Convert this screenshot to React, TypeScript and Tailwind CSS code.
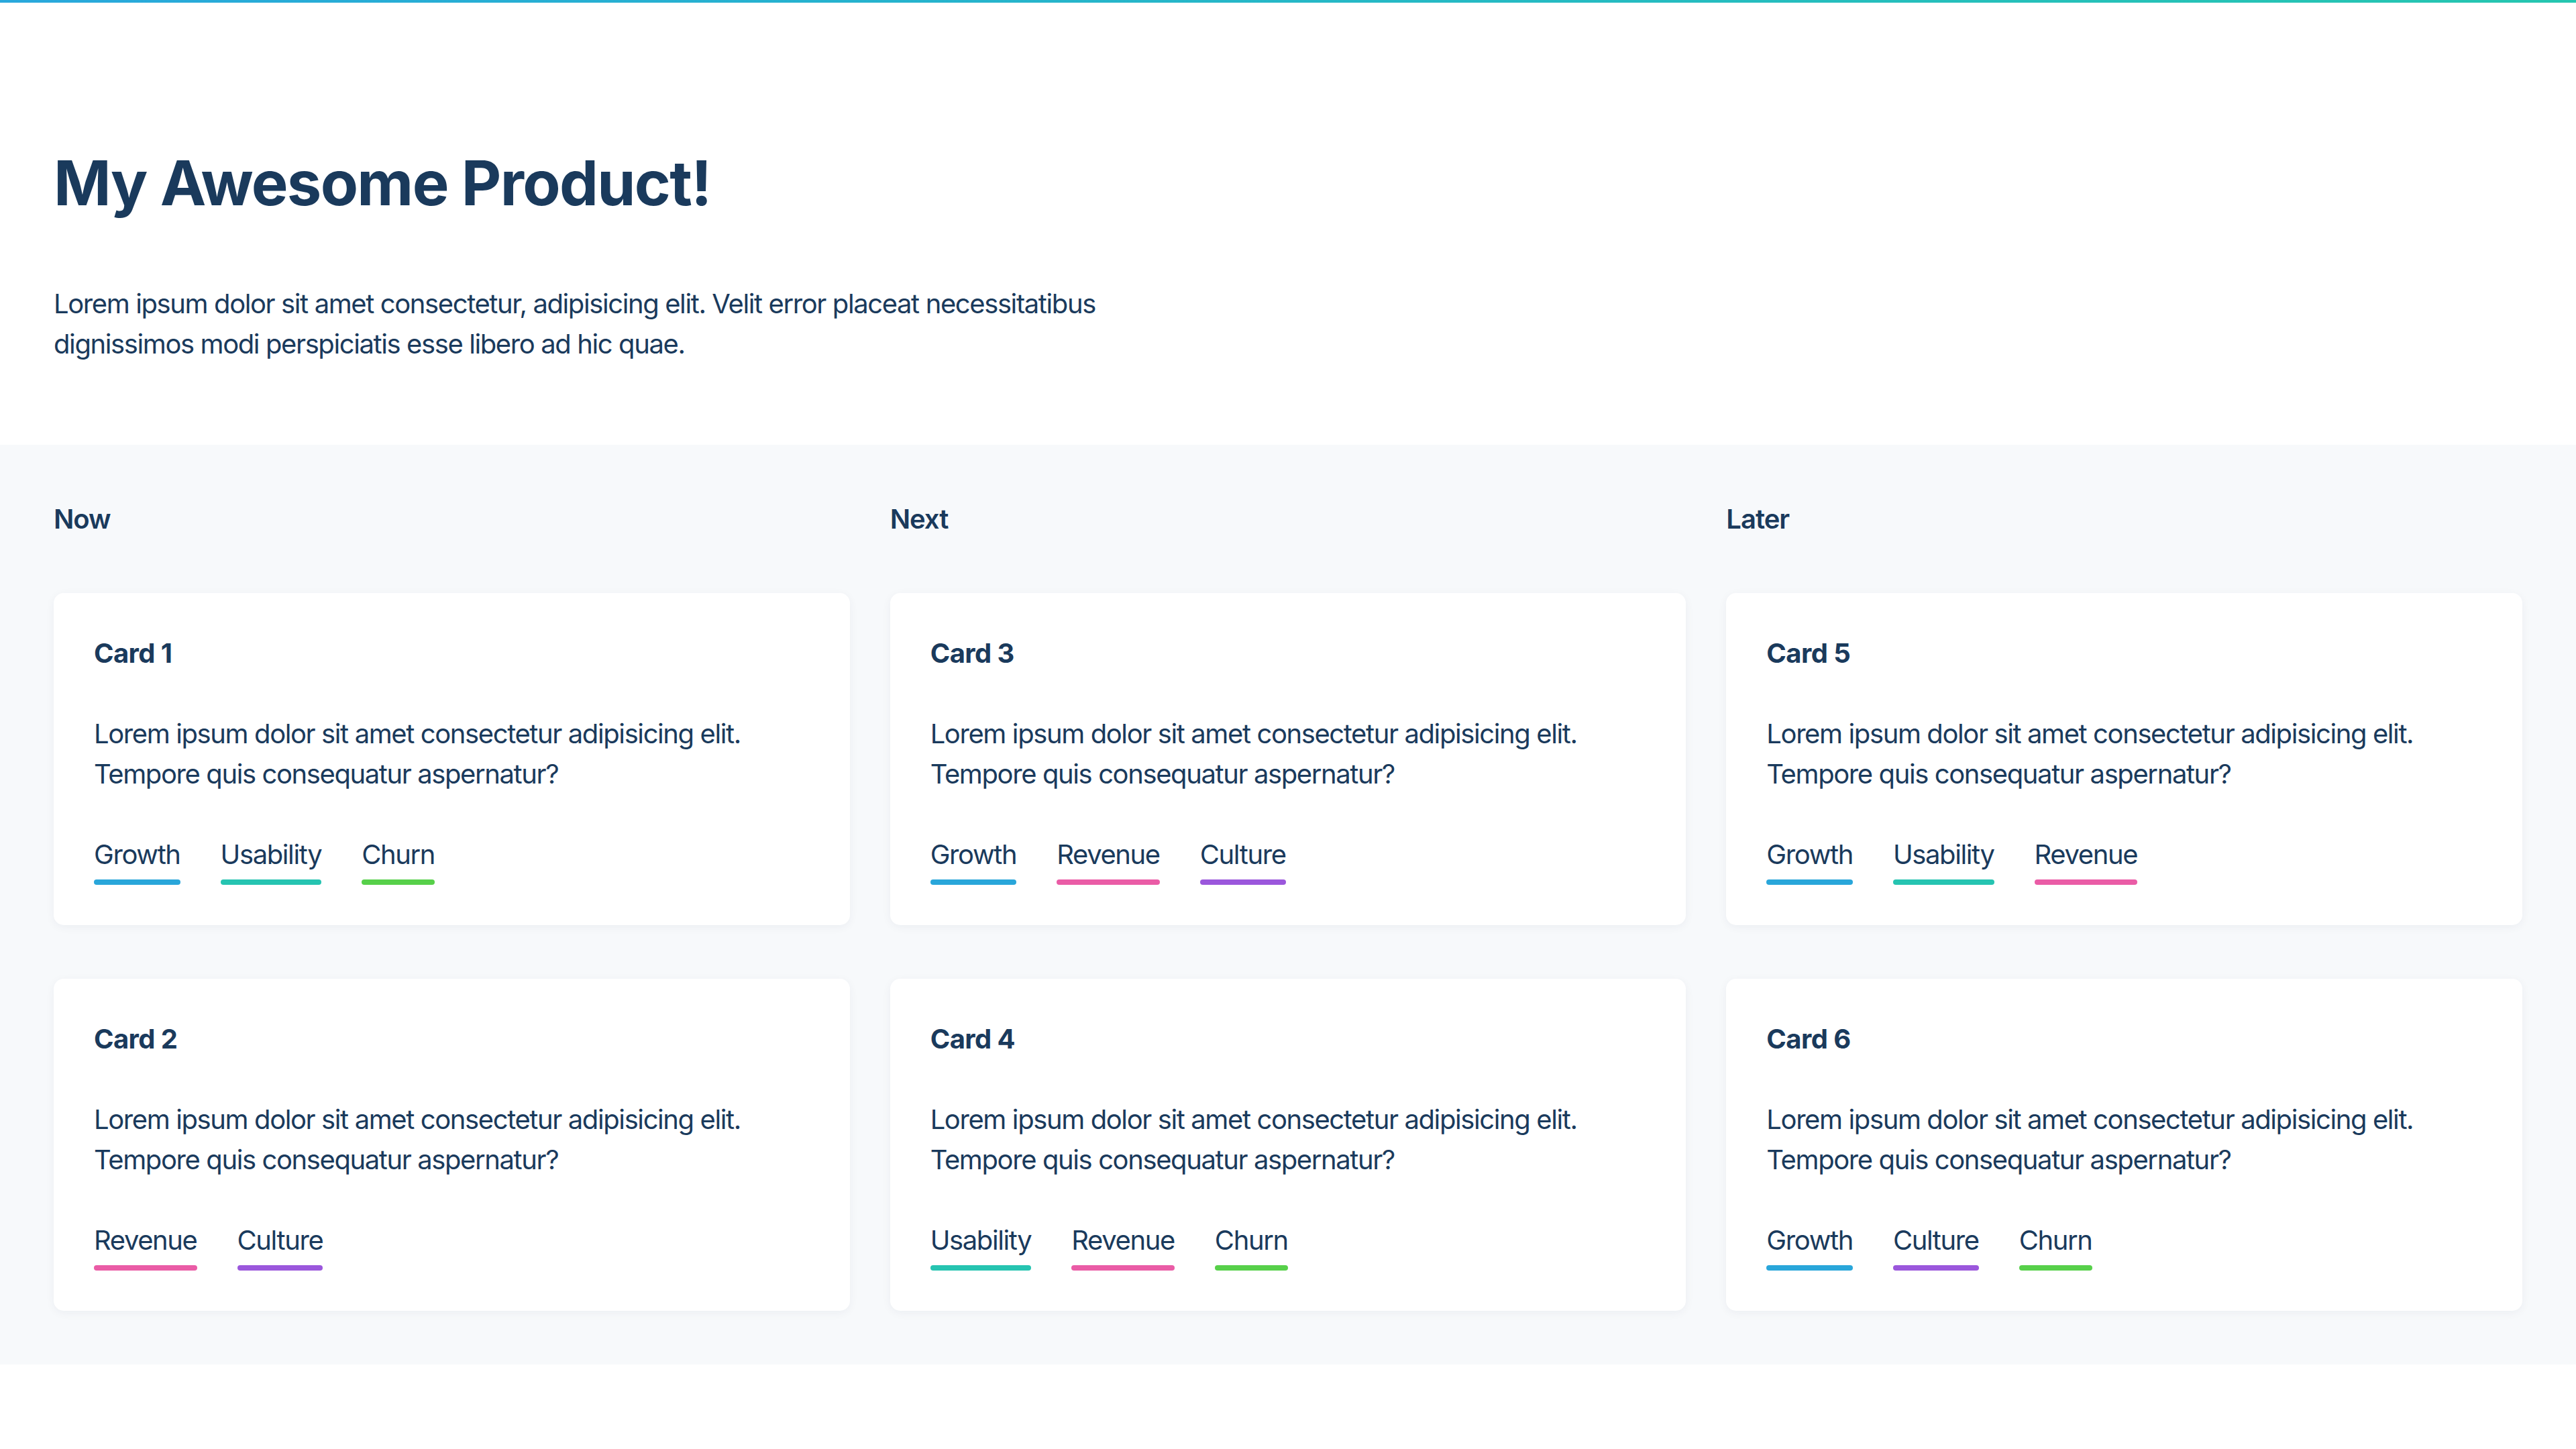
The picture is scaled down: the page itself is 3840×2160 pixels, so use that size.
import React from 'react';

type Tag = 'Growth' | 'Usability' | 'Churn' | 'Revenue' | 'Culture';

const tagColors: Record<Tag, string> = {
  Growth: 'bg-[#29a6da]',
  Usability: 'bg-[#26c4b1]',
  Churn: 'bg-[#57d04a]',
  Revenue: 'bg-[#ea5ca6]',
  Culture: 'bg-[#9b57dc]',
};

type CardData = { title: string; tags: Tag[] };

const columns: { name: string; cards: CardData[] }[] = [
  {
    name: 'Now',
    cards: [
      { title: 'Card 1', tags: ['Growth', 'Usability', 'Churn'] },
      { title: 'Card 2', tags: ['Revenue', 'Culture'] },
    ],
  },
  {
    name: 'Next',
    cards: [
      { title: 'Card 3', tags: ['Growth', 'Revenue', 'Culture'] },
      { title: 'Card 4', tags: ['Usability', 'Revenue', 'Churn'] },
    ],
  },
  {
    name: 'Later',
    cards: [
      { title: 'Card 5', tags: ['Growth', 'Usability', 'Revenue'] },
      { title: 'Card 6', tags: ['Growth', 'Culture', 'Churn'] },
    ],
  },
];

const Card = ({ card }: { card: CardData }) => {
  return (
    <div className="flex flex-col gap-[60px] bg-white rounded-[15px] p-[60px] shadow-[0_3px_14px_rgba(20,40,70,0.05)]">
      <h3 className="text-[40px] leading-[60px] font-bold tracking-[-0.6px]">{card.title}</h3>
      <p className="text-[40px] leading-[60px] tracking-[-1.4px]">
        Lorem ipsum dolor sit amet consectetur adipisicing elit. Tempore quis consequatur aspernatur?
      </p>
      <div className="flex gap-[60px]">
        {card.tags.map((tag) => (
          <div key={tag} className="flex flex-col">
            <span className="text-[40px] leading-[60px] tracking-[-1.4px]">{tag}</span>
            <div className={`mt-[7px] h-[8px] rounded-full ${tagColors[tag]}`}></div>
          </div>
        ))}
      </div>
    </div>
  );
};

const App = () => {
  return (
    <div className="min-h-screen bg-white text-[#1a3a5c] font-['Inter',sans-serif]">
      <div className="h-[4px] bg-gradient-to-r from-[#29a8dc] to-[#26c6b0]"></div>

      {/* Header */}
      <header className="px-[80px] pt-[213px] pb-[120px]">
        <h1 className="text-[92px] leading-[112px] font-bold tracking-[-1.7px]">My Awesome Product!</h1>
        <p className="mt-[94px] max-w-[1680px] text-[40px] leading-[60px] tracking-[-1.4px]">
          Lorem ipsum dolor sit amet consectetur, adipisicing elit. Velit error placeat necessitatibus dignissimos modi perspiciatis esse libero ad hic quae.
        </p>
      </header>

      {/* Roadmap */}
      <section className="bg-[#f7f9fb] px-[80px] pt-[81px] pb-[80px]">
        <div className="grid grid-cols-3 gap-[60px]">
          {columns.map((col) => (
            <div key={col.name} className="flex flex-col gap-[80px]">
              <h2 className="text-[40px] leading-[60px] font-semibold tracking-[-1px]">{col.name}</h2>
              {col.cards.map((card) => (
                <Card key={card.title} card={card} />
              ))}
            </div>
          ))}
        </div>
      </section>
    </div>
  );
};

export default App;
